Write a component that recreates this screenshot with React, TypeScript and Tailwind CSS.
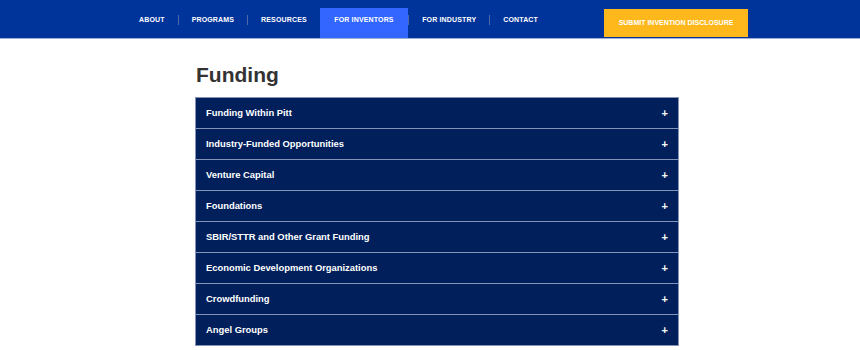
const navItems = ["About", "Programs", "Resources", "For Inventors", "For Industry", "Contact"];

const sections = [
  "Funding Within Pitt",
  "Industry-Funded Opportunities",
  "Venture Capital",
  "Foundations",
  "SBIR/STTR and Other Grant Funding",
  "Economic Development Organizations",
  "Crowdfunding",
  "Angel Groups",
];

const Header = () => {
  return (
    <header className="h-[39px] bg-[#00349a] border-b border-[#9fb0d6]">
      <div className="flex h-[38px] items-end pl-[126px] pr-[112px]">
        <nav className="flex items-stretch h-[30px]">
          {navItems.map((item, i) => {
            const active = item === "For Inventors";
            return (
              <div key={item} className="flex items-center">
                {i > 0 && !active && (
                  <span className="w-px h-[10px] bg-[#5068a8] mb-[6px]" />
                )}
                <a
                  className={
                    "flex items-start h-full pt-[7px] text-[7px] font-bold uppercase tracking-[0.15px] text-white " +
                    (active ? "bg-[#3366ff] px-[14.5px]" : "px-[13px]")
                  }
                >
                  {item}
                </a>
              </div>
            );
          })}
        </nav>
        <a className="ml-auto mb-px flex items-center justify-center w-[144px] h-[28px] bg-[#ffb81c] text-[7px] font-bold uppercase text-white">
          Submit Invention Disclosure
        </a>
      </div>
    </header>
  );
};

export default function App() {
  return (
    <div className="w-[860px] h-[350px] overflow-hidden bg-white font-['Liberation_Sans',Arial,sans-serif]">
      <Header />
      <main className="w-[484px] ml-[195px]">
        <h1 className="mt-[24px] mb-[10px] pl-px text-[21px] leading-[24px] font-bold text-[#333333]">Funding</h1>
        <div className="border border-[#8493b8] border-b-0">
          {sections.map((s) => (
            <div
              key={s}
              className="flex items-center justify-between h-[31px] pl-[10px] pr-[10px] bg-[#001f5b] border-b border-[#8493b8] text-white"
            >
              <span className="text-[9.4px] font-bold">{s}</span>
              <span className="text-[11px] font-bold leading-none">+</span>
            </div>
          ))}
        </div>
      </main>
    </div>
  );
}
